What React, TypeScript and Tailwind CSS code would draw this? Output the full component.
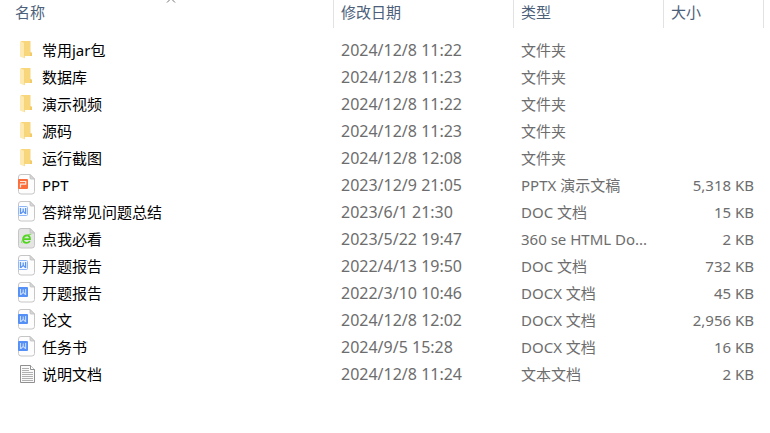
type FileKind = 'folder' | 'ppt' | 'doc' | 'docx' | 'html' | 'txt';

interface FileEntry {
  name: string;
  modified: string;
  type: string;
  size?: string;
  kind: FileKind;
}

const files: FileEntry[] = [
  { name: '常用jar包', modified: '2024/12/8 11:22', type: '文件夹', kind: 'folder' },
  { name: '数据库', modified: '2024/12/8 11:23', type: '文件夹', kind: 'folder' },
  { name: '演示视频', modified: '2024/12/8 11:22', type: '文件夹', kind: 'folder' },
  { name: '源码', modified: '2024/12/8 11:23', type: '文件夹', kind: 'folder' },
  { name: '运行截图', modified: '2024/12/8 12:08', type: '文件夹', kind: 'folder' },
  { name: 'PPT', modified: '2023/12/9 21:05', type: 'PPTX 演示文稿', size: '5,318 KB', kind: 'ppt' },
  { name: '答辩常见问题总结', modified: '2023/6/1 21:30', type: 'DOC 文档', size: '15 KB', kind: 'doc' },
  { name: '点我必看', modified: '2023/5/22 19:47', type: '360 se HTML Do...', size: '2 KB', kind: 'html' },
  { name: '开题报告', modified: '2022/4/13 19:50', type: 'DOC 文档', size: '732 KB', kind: 'doc' },
  { name: '开题报告', modified: '2022/3/10 10:46', type: 'DOCX 文档', size: '45 KB', kind: 'docx' },
  { name: '论文', modified: '2024/12/8 12:02', type: 'DOCX 文档', size: '2,956 KB', kind: 'docx' },
  { name: '任务书', modified: '2024/9/5 15:28', type: 'DOCX 文档', size: '16 KB', kind: 'docx' },
  { name: '说明文档', modified: '2024/12/8 11:24', type: '文本文档', size: '2 KB', kind: 'txt' },
];

function Page({ fill = '#fdfdfd' }: { fill?: string }) {
  return (
    <>
      <path
        d="M5 .5H14L18.5 5V17.5a2.5 2.5 0 0 1-2.5 2.5H5a2.5 2.5 0 0 1-2.5-2.5V3A2.5 2.5 0 0 1 5 .5Z"
        fill={fill}
        stroke="#c6c6c6"
      />
      <path d="M14 .5V4a1 1 0 0 0 1 1h3.5Z" fill="#d8d8d8" stroke="#bcbcbc" strokeWidth=".8" />
    </>
  );
}

function FileIcon({ kind }: { kind: FileKind }) {
  return (
    <svg viewBox="0 0 20 22" className="h-[22px] w-5 shrink-0" fill="none" aria-hidden="true">
      {kind === 'folder' && (
        <>
          <path d="M5 2h9.5v11l1.5 1v3H8Z" fill="#f8d67c" />
          <path d="M14.5 13l1.5 1v3h-2Z" fill="#f2c963" />
          <path d="M4 2.3 8.5 4v15.5L4 17.5Z" fill="#feeab0" />
          <path d="M8.5 4v15" stroke="#f3cc6c" strokeWidth=".6" />
        </>
      )}
      {kind === 'ppt' && (
        <>
          <Page />
          <rect x="2" y="5" width="10" height="10" rx="1" fill="#fb6f3c" />
          <path d="M4.5 13.5v-3.3h5.2V7.5H4" stroke="#ffe9df" strokeWidth="1.2" />
        </>
      )}
      {kind === 'doc' && (
        <>
          <Page />
          <rect x="2.5" y="5.5" width="9" height="9" rx="1" fill="#f4f8ff" stroke="#8fb6f9" />
          <path d="M4.5 7v5.4h.6L7.2 10.3l2.1 2.1h.3V7M7.2 7.5v3" stroke="#5b92f0" strokeWidth="1.3" />
        </>
      )}
      {kind === 'docx' && (
        <>
          <Page />
          <rect x="2" y="5" width="10" height="10" rx="1" fill="#5490f6" />
          <path d="M4.5 7v5.4h.6L7.2 10.3l2.1 2.1h.3V7M7.2 7.5v3" stroke="#c5dafd" strokeWidth="1.1" />
        </>
      )}
      {kind === 'html' && (
        <>
          <Page fill="#e4e4e4" />
          <path
            d="M7.2 11.2h6.8c.1-2.4-1.2-3.9-3.2-3.9-2.1 0-3.7 1.7-3.7 3.9s1.5 3.6 3.6 3.6c1.5 0 2.6-.6 3.1-1.8"
            stroke="#50d51e"
            strokeWidth="1.8"
          />
          <path d="M6.3 15.2c-1.7-.4.1-4.1 3.4-6.7 2.7-2.2 5.3-3.1 5.4-1.6" stroke="#65d93b" strokeWidth=".9" />
        </>
      )}
      {kind === 'txt' && (
        <>
          <path d="M4.5 2.5h10l4 4v13h-14Z" fill="#fafafa" stroke="#8f8f8f" />
          <path d="M14.5 2.5v4h4" fill="#fff" stroke="#8f8f8f" />
          <path d="M6 5.5h7M6 7.5h7M6 9.5h11M6 11.5h11M6 13.5h11M6 15.5h11M6 17.5h11" stroke="#b0b0b0" />
        </>
      )}
    </svg>
  );
}

function HeaderCell({ label, sorted }: { label: string; sorted?: boolean }) {
  return (
    <th
      scope="col"
      aria-sort={sorted ? 'ascending' : undefined}
      className="relative h-7 border-r border-[#e2e2e2] p-0 font-normal"
    >
      <button
        type="button"
        className={
          sorted
            ? 'block h-7 w-full pb-1 pl-[15px] text-left text-[#4c607a]'
            : 'block h-7 w-full pb-1 pl-[7px] text-left text-[#4c607a]'
        }
      >
        {label}
      </button>
      {sorted && (
        <svg
          viewBox="0 0 10 3"
          className="absolute top-0 left-1/2 h-[3px] w-2.5 -translate-x-px"
          fill="none"
          aria-hidden="true"
        >
          <path d="M1 2.5 4 -.5M9 2.5 6 -.5" stroke="#777" />
        </svg>
      )}
    </th>
  );
}

export default function App() {
  return (
    <main className="min-h-screen bg-white pr-1.5 font-['Noto_Sans','Noto_Sans_CJK_SC',sans-serif] text-[15px] leading-6">
      <table className="w-full table-fixed border-separate border-spacing-0">
        <colgroup>
          <col />
          <col className="w-[180px]" />
          <col className="w-[150px]" />
          <col className="w-[100px]" />
        </colgroup>
        <thead>
          <tr>
            <HeaderCell label="名称" sorted />
            <HeaderCell label="修改日期" />
            <HeaderCell label="类型" />
            <HeaderCell label="大小" />
          </tr>
        </thead>
        <tbody className="before:block before:h-2 before:content-['']">
          {files.map((file, i) => (
            <tr key={i} className="h-[27px] whitespace-nowrap text-[#6d6d6d]">
              <td className="p-0 text-black">
                <div className="flex items-center gap-1.5 pl-4">
                  <FileIcon kind={file.kind} />
                  <span>{file.name}</span>
                </div>
              </td>
              <td className="p-0 pl-[7px] text-base">{file.modified}</td>
              <td className="p-0 pl-[7px]">{file.type}</td>
              <td className="p-0 pr-2.5 text-right">{file.size}</td>
            </tr>
          ))}
        </tbody>
      </table>
    </main>
  );
}
